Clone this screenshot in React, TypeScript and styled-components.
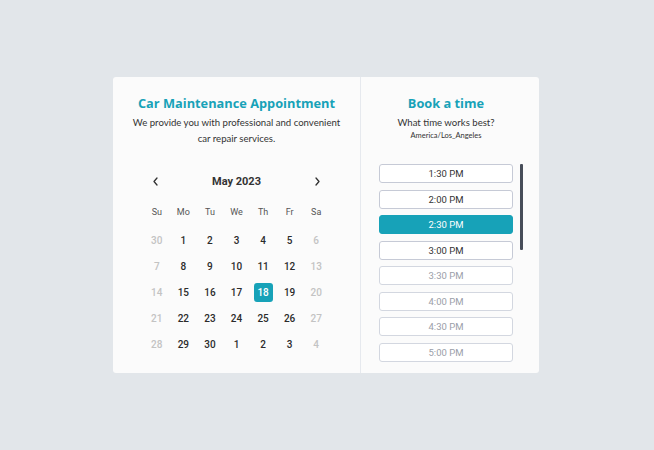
import React from "react";
import styled, { createGlobalStyle, css } from "styled-components";

const GlobalStyle = createGlobalStyle`
  html, body {
    margin: 0;
    padding: 0;
    background: #e2e6ea;
  }
  * { box-sizing: border-box; }
`;

const Page = styled.div`
  min-height: 100vh;
  display: flex;
  align-items: center;
  justify-content: center;
  padding-right: 2px;
`;

const Card = styled.div`
  width: 426px;
  height: 296px;
  background: #fbfbfb;
  border-radius: 3px;
  display: flex;
  overflow: hidden;
`;

const LeftPanel = styled.section`
  width: 247px;
  padding-top: 17px;
  display: flex;
  flex-direction: column;
  align-items: center;
`;

const Divider = styled.div`
  width: 1px;
  background: #e6e9ee;
`;

const RightPanel = styled.section`
  width: 178px;
  padding: 17px 16px 0 18px;
  display: flex;
  flex-direction: column;
`;

const Title = styled.h1`
  margin: 0;
  font-family: "Open Sans", "Liberation Sans", sans-serif;
  font-weight: 700;
  font-size: 12.8px;
  line-height: 18px;
  color: #17a2b8;
  text-align: center;
`;

const Lead = styled.p`
  margin: 3px 0 0;
  font-family: Lato, "Liberation Sans", sans-serif;
  font-size: 9.6px;
  line-height: 16px;
  color: #333;
  text-align: center;
`;

const Zone = styled.div`
  font-family: Lato, "Liberation Sans", sans-serif;
  font-size: 7.5px;
  line-height: 10px;
  color: #333;
  text-align: center;
`;

const Calendar = styled.div`
  margin-top: 26px;
  width: 186px;
  font-family: Roboto, "Liberation Sans", sans-serif;
`;

const MonthBar = styled.div`
  height: 16px;
  display: flex;
  align-items: center;
  justify-content: space-between;
  padding: 0 7px;
`;

const MonthLabel = styled.span`
  font-weight: 700;
  font-size: 11px;
  color: #333;
`;

const NavButton = styled.button`
  border: 0;
  background: none;
  padding: 0;
  width: 10px;
  height: 14px;
  display: flex;
  align-items: center;
  justify-content: center;
  color: #333;
`;

const Grid = styled.div`
  margin-top: 13px;
  display: grid;
  grid-template-columns: repeat(7, 1fr);
  grid-template-rows: 26px;
  grid-auto-rows: 25.8px;
`;

const WeekdayCell = styled.div`
  align-self: start;
  height: 20px;
  display: flex;
  align-items: center;
  justify-content: center;
  font-size: 9px;
  color: #555;
`;

const DayCell = styled.div<{ $muted?: boolean; $selected?: boolean }>`
  display: flex;
  align-items: center;
  justify-content: center;
  > span {
    width: 19px;
    height: 19px;
    border-radius: 3px;
    display: flex;
    align-items: center;
    justify-content: center;
    font-size: 10px;
    font-weight: 500;
    color: ${(p) => (p.$muted ? "#c3c3c3" : "#2b2b2b")};
    ${(p) =>
      p.$selected &&
      css`
        background: #17a2b8;
        color: #fff;
      `}
  }
`;

const TimeList = styled.div`
  margin-top: 23px;
  flex: 1;
  display: flex;
  gap: 7px;
  overflow: hidden;
`;

const Slots = styled.div`
  width: 134px;
  display: flex;
  flex-direction: column;
  gap: 6.5px;
`;

const Slot = styled.button<{ $active?: boolean; $disabled?: boolean }>`
  flex: none;
  height: 19px;
  border-radius: 3px;
  border: 1px solid ${(p) => (p.$active ? "#17a2b8" : p.$disabled ? "#d3d7e0" : "#c6cad6")};
  background: ${(p) => (p.$active ? "#17a2b8" : "#fff")};
  color: ${(p) => (p.$active ? "#fff" : p.$disabled ? "#9a9ea8" : "#333")};
  font-family: Roboto, "Liberation Sans", sans-serif;
  font-size: 9.5px;
  padding: 0;
`;

const ScrollThumb = styled.div`
  width: 3px;
  height: 86px;
  border-radius: 1px;
  background: #474d59;
  flex: none;
`;

const Header = styled.div`
  width: 134px;
  display: flex;
  flex-direction: column;
  align-items: center;
`;

const Chevron = ({ dir }: { dir: "left" | "right" }) => (
  <svg width="7" height="9" viewBox="0 0 7 9" fill="none">
    <path
      d={dir === "left" ? "M5 1 L2 4.5 L5 8" : "M2 1 L5 4.5 L2 8"}
      stroke="#333"
      strokeWidth="1.3"
      strokeLinecap="round"
      strokeLinejoin="round"
    />
  </svg>
);

const weekdays = ["Su", "Mo", "Tu", "We", "Th", "Fr", "Sa"];

type Day = { n: number; key: string };
const weeks: Day[][] = (() => {
  const days: Day[] = [{ n: 30, key: "p30" }];
  for (let d = 1; d <= 30; d++) days.push({ n: d, key: `m${d}` });
  for (let d = 1; d <= 4; d++) days.push({ n: d, key: `n${d}` });
  const rows: Day[][] = [];
  for (let i = 0; i < days.length; i += 7) rows.push(days.slice(i, i + 7));
  return rows;
})();

const slots = [
  "1:30 PM",
  "2:00 PM",
  "2:30 PM",
  "3:00 PM",
  "3:30 PM",
  "4:00 PM",
  "4:30 PM",
  "5:00 PM",
];

export default function App() {
  return (
    <>
      <GlobalStyle />
      <Page>
        <Card>
          <LeftPanel>
            <Title>Car Maintenance Appointment</Title>
            <Lead>
              We provide you with professional and convenient
              <br />
              car repair services.
            </Lead>
            <Calendar>
              <MonthBar>
                <NavButton aria-label="Previous month">
                  <Chevron dir="left" />
                </NavButton>
                <MonthLabel>May 2023</MonthLabel>
                <NavButton aria-label="Next month">
                  <Chevron dir="right" />
                </NavButton>
              </MonthBar>
              <Grid>
                {weekdays.map((w) => (
                  <WeekdayCell key={w}>{w}</WeekdayCell>
                ))}
                {weeks.map((row) =>
                  row.map((d, i) => (
                    <DayCell
                      key={d.key}
                      $muted={i === 0 || i === 6}
                      $selected={d.key === "m18"}
                    >
                      <span>{d.n}</span>
                    </DayCell>
                  ))
                )}
              </Grid>
            </Calendar>
          </LeftPanel>
          <Divider />
          <RightPanel>
            <Header>
              <Title>Book a time</Title>
              <Lead>What time works best?</Lead>
              <Zone>America/Los_Angeles</Zone>
            </Header>
            <TimeList>
              <Slots>
                {slots.map((s, i) => (
                  <Slot key={s} $active={i === 2} $disabled={i >= 4}>
                    {s}
                  </Slot>
                ))}
              </Slots>
              <ScrollThumb />
            </TimeList>
          </RightPanel>
        </Card>
      </Page>
    </>
  );
}
